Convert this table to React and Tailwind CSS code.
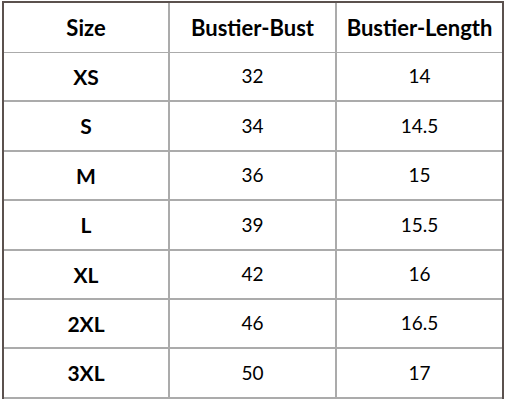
const ROWS = [
  ['XS', '32', '14'],
  ['S', '34', '14.5'],
  ['M', '36', '15'],
  ['L', '39', '15.5'],
  ['XL', '42', '16'],
  ['2XL', '46', '16.5'],
  ['3XL', '50', '17'],
]

export default function App() {
  return (
    <div className="w-[506px] h-[402px] bg-white pl-[2px] pt-[1px] font-['Lato',sans-serif] text-black">
      <div className="w-[502px] border-x-2 border-t-2 border-[#5b514e]">
        <div className="grid grid-cols-[166px_167px_165px] h-[50px] border-b border-[#ababab]">
          <div className="flex items-center justify-center font-bold text-[22px] border-r-2 border-[#ababab]">Size</div>
          <div className="flex items-center justify-center font-bold text-[22px] border-r-2 border-[#ababab]">Bustier-Bust</div>
          <div className="flex items-center justify-center font-bold text-[22px]">Bustier-Length</div>
        </div>
        {ROWS.map(([size, bust, length]) => (
          <div key={size} className="grid grid-cols-[166px_167px_165px] h-[49.4px] border-b-2 border-[#ababab]">
            <div className="flex items-center justify-center font-bold text-[21px] border-r-2 border-[#ababab]">{size}</div>
            <div className="flex items-center justify-center text-[19px] border-r-2 border-[#ababab]">{bust}</div>
            <div className="flex items-center justify-center text-[19px]">{length}</div>
          </div>
        ))}
      </div>
    </div>
  )
}
